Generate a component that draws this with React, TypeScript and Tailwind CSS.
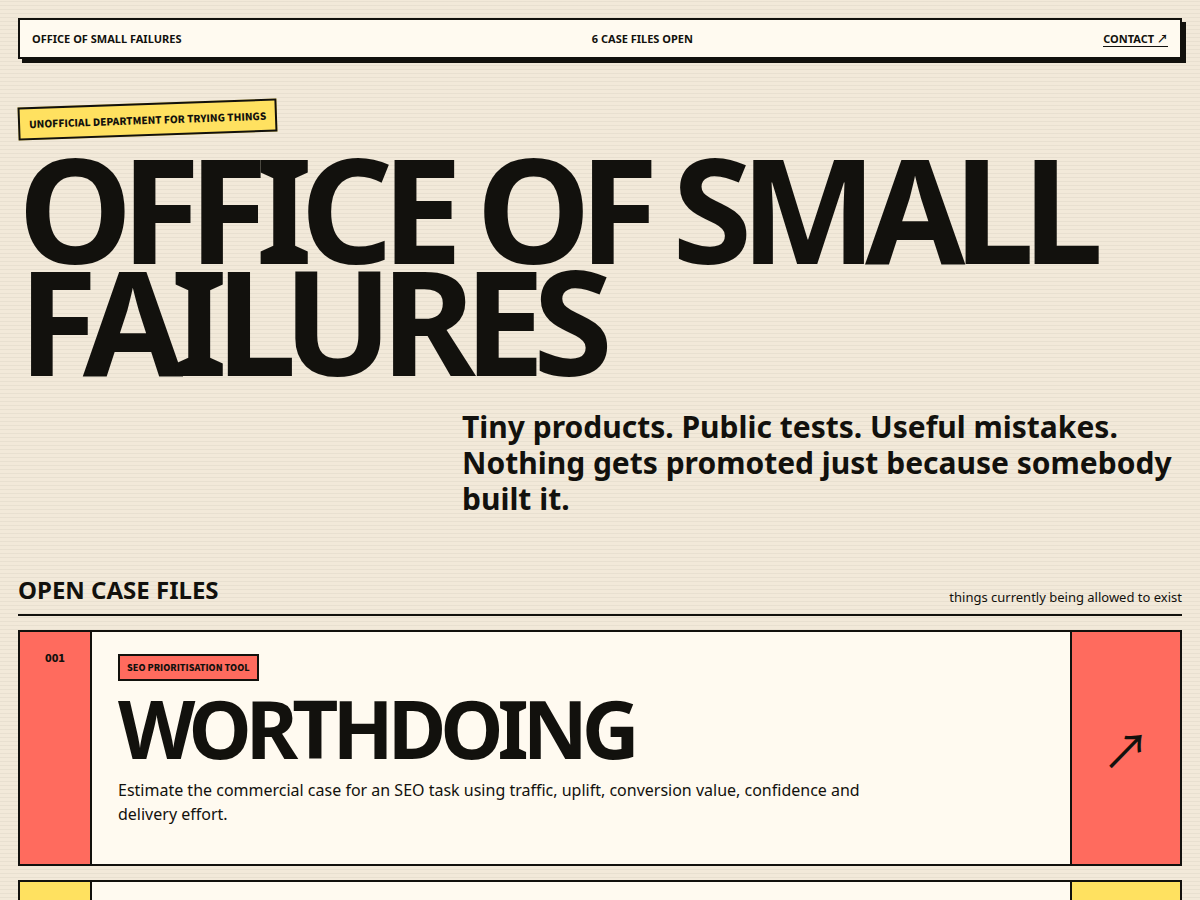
import clsx from "clsx";

type CaseFile = {
  number: string;
  tag?: string;
  name?: string;
  summary?: string;
  color: string;
};

const caseFiles: CaseFile[] = [
  {
    number: "001",
    tag: "SEO prioritisation tool",
    name: "WorthDoing",
    summary: "Estimate the commercial case for an SEO task using traffic, uplift, conversion value, confidence and delivery effort.",
    color: "bg-[#ff6b5e]"
  },
  {
    number: "002",
    color: "bg-[#ffe160]"
  }
];

function CaseCard({ file }: { file: CaseFile }) {
  return (
    <a href="#" className="grid min-h-[236px] grid-cols-[72px_1fr_110px] border-2 border-[#12110d] bg-[#fffaf0]" aria-label={file.name ?? file.number}>
      <span className={clsx("border-r-2 border-[#12110d] pt-[17px] text-center font-['Noto_Sans_CJK_JP',sans-serif] text-[11px] leading-4 font-black", file.color)}>
        {file.number}
      </span>
      <div className="px-[26px] pt-[22px] pb-6">
        {file.tag ? (
          <span className={clsx("block w-fit border-2 border-[#12110d] px-[7px] py-1 font-['Noto_Sans_CJK_JP',sans-serif] text-[9px] leading-[15px] font-black uppercase", file.color)}>
            {file.tag}
          </span>
        ) : null}
        {file.name ? <h3 className="mt-[11px] text-[80px] leading-[72px] font-bold tracking-[-6px] uppercase">{file.name}</h3> : null}
        {file.summary ? <p className="mt-[14px] max-w-[760px] text-base leading-6">{file.summary}</p> : null}
      </div>
      <span className={clsx("grid place-items-center border-l-2 border-[#12110d] font-['Noto_Sans_CJK_JP',sans-serif] text-[48px]", file.color)}>↗</span>
    </a>
  );
}

export default function App() {
  return (
    <main className="min-h-screen bg-[#f2e9d9] bg-[repeating-linear-gradient(180deg,transparent_0px,transparent_1px,rgba(18,17,13,0.045)_1px,rgba(18,17,13,0.045)_2px,transparent_2px,transparent_4px)] p-[18px] font-['Noto_Sans',sans-serif] text-[#12110d]">
      <header className="flex items-center justify-between border-2 border-[#12110d] bg-[#fffaf0] px-3 py-2 text-[11px] leading-[21px] font-bold uppercase shadow-[4px_4px_0_#12110d]">
        <span>Office of Small Failures</span>
        <span>6 case files open</span>
        <a href="#" className="border-b border-[#12110d] leading-[15px]">
          Contact <span className="font-['Noto_Sans_CJK_JP',sans-serif]">↗</span>
        </a>
      </header>
      <section className="pt-11">
        <p className="block w-fit -rotate-2 border-2 border-[#12110d] bg-[#ffe160] px-[9px] py-[6px] font-['Noto_Sans_CJK_JP',sans-serif] text-[10px] leading-[17px] font-black uppercase">
          Unofficial department for trying things
        </p>
        <h1 className="mt-4 text-[145px] leading-[112px] font-bold tracking-[-12px] uppercase">Office of Small Failures</h1>
        <p className="mt-[33px] ml-auto max-w-[720px] text-[30px] leading-9 font-bold">
          Tiny products. Public tests. Useful mistakes. Nothing gets promoted just because somebody built it.
        </p>
      </section>
      <section className="mt-[57px]">
        <div className="flex items-end justify-between border-b-2 border-[#12110d] pb-2">
          <h2 className="text-2xl font-bold uppercase">Open case files</h2>
          <p className="text-[13px] leading-[18px]">things currently being allowed to exist</p>
        </div>
        <div className="mt-[14px] grid gap-[14px]">
          {caseFiles.map((file) => (
            <CaseCard file={file} key={file.number} />
          ))}
        </div>
      </section>
    </main>
  );
}
